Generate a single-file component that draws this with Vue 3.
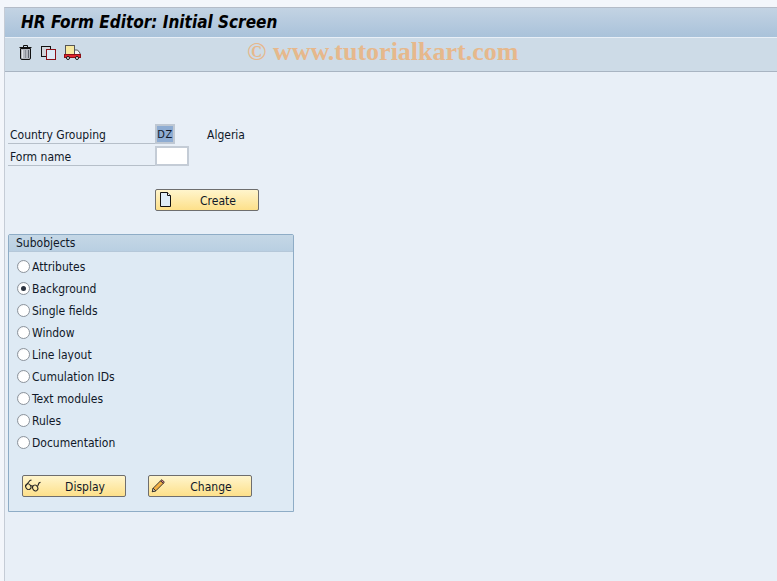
<script setup>
const subobjects = [
  { label: 'Attributes', on: false },
  { label: 'Background', on: true },
  { label: 'Single fields', on: false },
  { label: 'Window', on: false },
  { label: 'Line layout', on: false },
  { label: 'Cumulation IDs', on: false },
  { label: 'Text modules', on: false },
  { label: 'Rules', on: false },
  { label: 'Documentation', on: false },
]
</script>

<template>
  <div class="page">
    <div class="window">
      <header class="title"><h1>HR Form Editor: Initial Screen</h1></header>
      <div class="toolbar">
        <svg class="tool trash" width="13" height="15" viewBox="0 0 13 15">
          <path d="M0.500 2.500h12M4.500 2.500V0.500h4v2" fill="none" stroke="#111"/>
          <path d="M1.500 3.500h10V13a1.500 1.500 0 0 1-1.500 1.500H3A1.500 1.500 0 0 1 1.500 13z" fill="#b4b8c0" stroke="#111"/>
          <path d="M3.500 5v8" stroke="#e4e6ea"/>
          <path d="M6.500 5v8" stroke="#8c909a"/>
          <path d="M9.500 5v8" stroke="#5d626c"/>
        </svg>
        <svg class="tool copy" width="15" height="14" viewBox="0 0 15 14">
          <rect x="0.500" y="0.500" width="9" height="10" fill="#d0d4da" stroke="#111"/>
          <rect x="5.500" y="3.500" width="9" height="10" fill="#dce9f6" stroke="#8c1016"/>
        </svg>
        <svg class="tool truck" width="17" height="15" viewBox="0 0 17 15">
          <rect x="1.500" y="0.500" width="9" height="9" fill="#f7e9a0" stroke="#555"/>
          <path d="M10.500 5h3l2.500 3v1.500h-5.500z" fill="#f4f4f4" stroke="#555"/>
          <rect x="0.500" y="9.500" width="16" height="3" fill="#e0262c" stroke="#8c1016"/>
          <circle cx="4" cy="13" r="1.500" fill="#fff" stroke="#111"/>
          <circle cx="13" cy="13" r="1.500" fill="#fff" stroke="#111"/>
        </svg>
        <span class="watermark">© www.tutorialkart.com</span>
      </div>

      <main class="content">
        <div class="form">
          <div class="row">
            <label class="label">Country Grouping</label>
            <span class="field key">DZ</span>
            <span class="desc">Algeria</span>
          </div>
          <div class="row">
            <label class="label">Form name</label>
            <span class="field empty"></span>
          </div>
        </div>

        <button class="btn create" type="button">
          <svg class="btn-icon doc" width="11" height="15" viewBox="0 0 11 15">
            <path d="M0.500 0.500h7l3 3v11H0.500z" fill="#dfedf8" stroke="#111"/>
            <path d="M7.500 0.500V3.500h3" fill="#fff" stroke="#111"/>
          </svg>
          <span>Create</span>
        </button>

        <section class="group">
          <div class="group-title">Subobjects</div>
          <div class="group-body">
            <div v-for="item in subobjects" :key="item.label" class="radio-row">
              <span class="radio" :class="{ on: item.on }"></span>
              <span class="radio-text">{{ item.label }}</span>
            </div>
            <div class="actions">
              <button class="btn" type="button">
                <svg class="btn-icon glasses" width="17" height="14" viewBox="0 0 17 14">
                  <g fill="none" stroke="#222" stroke-width="1.050">
                    <ellipse cx="4.300" cy="8.700" rx="2.500" ry="3" transform="rotate(-30 4.300 8.700)"/>
                    <ellipse cx="11.200" cy="10" rx="2.500" ry="3" transform="rotate(-30 11.200 10)"/>
                    <path d="M6.300 7.500L9.200 8.200M1.500 8L6 2.500l1.500-.5M13.500 8.500L15 5l1.500-.8"/>
                  </g>
                </svg>
                <span>Display</span>
              </button>
              <button class="btn" type="button">
                <svg class="btn-icon pencil" width="14" height="14" viewBox="0 0 16 16">
                  <path d="M1.500 14.500L2.500 10.500L11 2L14 5L5.500 13.500z" fill="#f3b044" stroke="#222"/>
                  <path d="M11 2L12.500 .8L15.200 3.500L14 5z" fill="#e8838b" stroke="#222"/>
                  <path d="M1.500 14.500L2.500 10.500L5.500 13.500z" fill="#f5e3c4" stroke="#222"/>
                </svg>
                <span>Change</span>
              </button>
            </div>
          </div>
        </section>
      </main>
    </div>
  </div>
</template>

<style scoped>
.page {
  width: 777px;
  height: 581px;
  box-sizing: border-box;
  padding: 7px 0 0 4px;
  background: #f3f6fb;
  overflow: hidden;
  font-family: "DejaVu Sans Condensed", "DejaVu Sans", sans-serif;
  font-stretch: condensed;
  font-size: 12px;
  color: #101828;
}
.window {
  height: 574px;
  background: #e8eff7;
  border-left: 1px solid #c5ccd6;
  border-top: 1px solid #b4bcc8;
}
.title {
  height: 30px;
  box-sizing: border-box;
  padding: 4px 0 0 16px;
  background: linear-gradient(#c3d3e3, #a9c2da);
  border-bottom: 1px solid #e8eff7;
}
h1 {
  margin: 0;
  font-size: 17px;
  line-height: 20px;
  font-weight: bold;
  font-style: italic;
  color: #000;
  white-space: nowrap;
}
.toolbar {
  position: relative;
  height: 34px;
  box-sizing: border-box;
  display: flex;
  align-items: flex-start;
  background: #cddbe7;
  border-bottom: 1px solid #a8b4c2;
}
.tool { display: block; flex: none; }
.trash { margin: 7px 0 0 14px; }
.copy { margin: 8px 0 0 9px; }
.truck { margin: 7px 0 0 8px; }
.watermark {
  position: absolute;
  left: 242px;
  top: 0;
  font-family: "Liberation Serif", serif;
  font-stretch: normal;
  font-weight: bold;
  font-size: 26px;
  line-height: 28px;
  color: #e6b88c;
  white-space: nowrap;
}
.content {
  padding: 52px 0 0 3px;
}
.form { width: 300px; }
.row {
  height: 22px;
  display: flex;
  align-items: flex-start;
}
.label {
  height: 19px;
  padding-left: 2px;
  border-bottom: 1px solid #b6bfc9;
  line-height: 22px;
  white-space: nowrap;
  flex: none;
  width: 145px;
}
.field {
  display: block;
  box-sizing: border-box;
  height: 20px;
  border: 2px solid #c4ccd6;
  line-height: 18px;
  flex: none;
}
.key {
  width: 20px;
  background: #8eacd2;
  text-align: center;
  font-size: 11px;
  letter-spacing: 0.5px;
  border-color: #bfc8d3;
}
.empty {
  width: 34px;
  background: #fff;
}
.desc {
  margin-left: 32px;
  line-height: 22px;
}
.btn {
  position: relative;
  width: 104px;
  height: 22px;
  padding: 1px 0 0;
  display: block;
  box-sizing: border-box;
  border: 1px solid #6e6e6e;
  border-radius: 2px;
  background: linear-gradient(#fff5cc, #fde08a);
  font: inherit;
  color: #101828;
  text-align: center;
}
.btn span { line-height: 21px; margin-left: 22px; }
.btn-icon {
  position: absolute;
  left: 3px;
  top: 2px;
}
.doc { left: 4px; }
.glasses { left: 1px; }
.pencil { left: 2px; top: 3px; }
.create { margin: 21px 0 0 147px; }
.group {
  width: 286px;
  height: 278px;
  box-sizing: border-box;
  margin-top: 23px;
  border: 1px solid #8eacc6;
  border-radius: 2px 2px 0 0;
  background: #deeaf4;
}
.group-title {
  height: 16px;
  padding-left: 7px;
  line-height: 16px;
  background: linear-gradient(#c5d7e6, #b9cfe2);
  border-bottom: 1px solid #b5c8d9;
}
.group-body { padding: 3px 0 0 8px; }
.radio-row {
  height: 22px;
  display: flex;
  align-items: center;
  white-space: nowrap;
}
.radio-text { padding-top: 2px; }
.radio {
  width: 13px;
  height: 13px;
  margin-right: 2px;
  box-sizing: border-box;
  border: 1px solid #8d949c;
  border-radius: 50%;
  background: radial-gradient(circle at 60% 60%, #fff 55%, #e3e6ea);
  display: flex;
  align-items: center;
  justify-content: center;
  flex: none;
}
.radio.on::after {
  content: "";
  width: 5px;
  height: 5px;
  border-radius: 50%;
  background: #2d3440;
}
.actions {
  display: flex;
  gap: 22px;
  margin: 22px 0 0 5px;
}
</style>

<style>
html, body { margin: 0; background: #f3f6fb; }
</style>
